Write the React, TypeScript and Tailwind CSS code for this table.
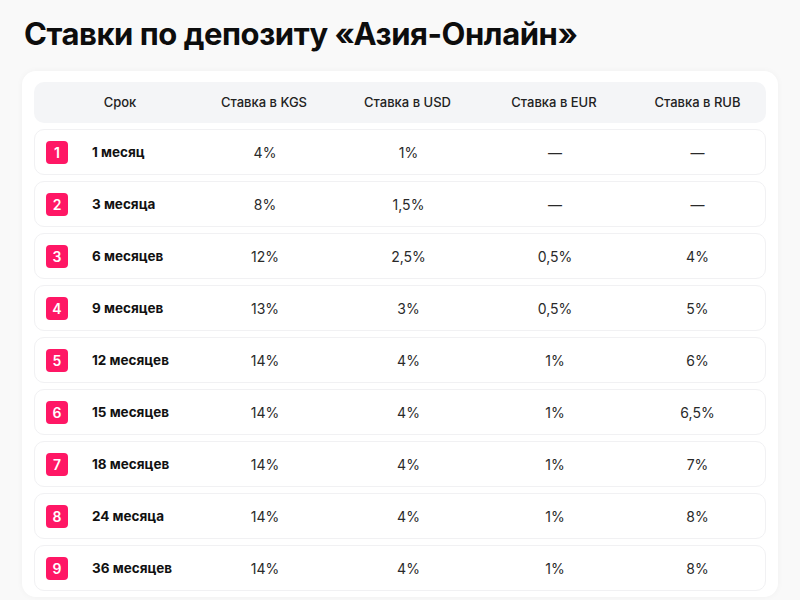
import React from "react";

const rows = [
  { term: "1 месяц", kgs: "4%", usd: "1%", eur: "—", rub: "—" },
  { term: "3 месяца", kgs: "8%", usd: "1,5%", eur: "—", rub: "—" },
  { term: "6 месяцев", kgs: "12%", usd: "2,5%", eur: "0,5%", rub: "4%" },
  { term: "9 месяцев", kgs: "13%", usd: "3%", eur: "0,5%", rub: "5%" },
  { term: "12 месяцев", kgs: "14%", usd: "4%", eur: "1%", rub: "6%" },
  { term: "15 месяцев", kgs: "14%", usd: "4%", eur: "1%", rub: "6,5%" },
  { term: "18 месяцев", kgs: "14%", usd: "4%", eur: "1%", rub: "7%" },
  { term: "24 месяца", kgs: "14%", usd: "4%", eur: "1%", rub: "8%" },
  { term: "36 месяцев", kgs: "14%", usd: "4%", eur: "1%", rub: "8%" },
];

const gridCols = "grid grid-cols-[158px_144px_143px_150px_1fr] items-center";

export default function App() {
  return (
    <div
      className="h-[600px] w-[800px] overflow-hidden bg-[#f9f9f9] text-[#1a1a1a]"
      style={{ fontFamily: "Inter, 'Noto Sans', sans-serif" }}
    >
      <h1 className="px-[24px] pt-[12px] text-[31px] font-bold leading-[44px] tracking-[-0.45px] text-[#0d0d0d]">
        Ставки по депозиту «Азия-Онлайн»
      </h1>

      <div className="mx-[22px] mt-[15px] rounded-[14px] bg-white px-[12px] pt-[11px] pb-[6px] shadow-[0_0_6px_rgba(0,0,0,0.04)]">
        <div className={`${gridCols} h-[41px] rounded-[10px] bg-[#f4f5f7] text-[13px] font-medium text-[#222]`}>
          <div className="pl-[14px] text-center">Срок</div>
          <div className="text-center">Ставка в KGS</div>
          <div className="text-center">Ставка в USD</div>
          <div className="text-center">Ставка в EUR</div>
          <div className="text-center">Ставка в RUB</div>
        </div>

        <div className="mt-[6px] flex flex-col gap-[6px]">
          {rows.map((r, i) => (
            <div
              key={r.term}
              className={`${gridCols} h-[46px] rounded-[10px] border border-[#f1f1f3] text-[14px] text-[#2a2a2a]`}
            >
              <div className="flex items-center gap-[24px] pl-[11px]">
                <span className="flex h-[23px] w-[22px] items-center justify-center rounded-[4px] bg-[#ff1765] text-[14px] font-semibold text-white">
                  {i + 1}
                </span>
                <span className="text-[13.5px] font-bold text-[#111]">{r.term}</span>
              </div>
              <div className="text-center">{r.kgs}</div>
              <div className="text-center">{r.usd}</div>
              <div className="text-center">{r.eur}</div>
              <div className="text-center">{r.rub}</div>
            </div>
          ))}
        </div>
      </div>
    </div>
  );
}
